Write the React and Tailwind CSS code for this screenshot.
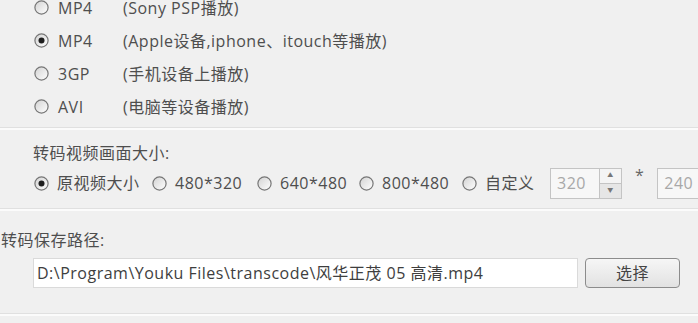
import React from 'react'

const font = { fontFamily: '"Open Sans", "Noto Sans CJK SC", sans-serif' }

function Radio({ checked }) {
  return (
    <svg width="15" height="15" viewBox="0 0 15 15" className="shrink-0">
      <defs>
        <linearGradient id="rg" x1="0" y1="0" x2="1" y2="1">
          <stop offset="0" stopColor="#d2d2d2" />
          <stop offset="1" stopColor="#ffffff" />
        </linearGradient>
      </defs>
      <circle cx="7.5" cy="7.5" r="6.6" fill="url(#rg)" stroke="#767676" strokeWidth="1.2" />
      {checked && <circle cx="7.5" cy="7.5" r="3" fill="#1e1e1e" />}
    </svg>
  )
}

const formats = [
  { name: 'MP4', desc: '(Sony PSP播放)' },
  { name: 'MP4', desc: '(Apple设备,iphone、itouch等播放)', checked: true },
  { name: '3GP', desc: '(手机设备上播放)' },
  { name: 'AVI', desc: '(电脑等设备播放)' },
]

const sizes = [
  { label: '原视频大小', w: 'w-[118px]', checked: true },
  { label: '480*320', w: 'w-[105px]' },
  { label: '640*480', w: 'w-[102px]' },
  { label: '800*480', w: 'w-[103px]' },
  { label: '自定义', w: 'w-[88px]' },
]

function Divider() {
  return (
    <div>
      <div className="h-px bg-[#e0e0e0]" />
      <div className="h-[2px] bg-[#fbfbfb]" />
    </div>
  )
}

export default function App() {
  return (
    <div
      className="relative h-[323px] w-[698px] overflow-hidden bg-[#f0f0f0] text-[16px] tracking-[0.5px] text-[#4e4e4e]"
      style={font}
    >
      <div className="mt-[-9px] pl-[34px]">
        {formats.map((f, i) => (
          <div key={i} className="flex h-[33px] items-center">
            <Radio checked={f.checked} />
            <span className="ml-[9px] w-[65px]">{f.name}</span>
            <span>{f.desc}</span>
          </div>
        ))}
      </div>

      <div className="h-[4px]" />
      <Divider />

      <div className="pl-[33px] pt-[12px]">
        <div className="h-[22px] leading-[22px]">转码视频画面大小:</div>
        <div className="mt-[3px] flex h-[32px] items-center pl-[1px]">
          {sizes.map((s, i) => (
            <div key={i} className={`flex shrink-0 items-center ${s.w}`}>
              <Radio checked={s.checked} />
              <span className="ml-[8px]">{s.label}</span>
            </div>
          ))}
          <div className="flex h-[31px] w-[72px] shrink-0 border border-[#c4c4c4] bg-[#f7f7f7]">
            <div className="flex flex-1 items-center pl-[6px] text-[#a8a8a8]">320</div>
            <div className="flex w-[22px] flex-col border-l border-[#c4c4c4]">
              <div className="flex flex-1 items-center justify-center border-b border-[#c4c4c4] bg-[#f4f4f4] text-[6px] text-[#777]">▲</div>
              <div className="flex flex-1 items-center justify-center bg-[#e6e6e6] text-[6px] text-[#777]">▼</div>
            </div>
          </div>
          <span className="mx-[13px] mt-[-4px] shrink-0 self-start text-[#666]">*</span>
          <div className="flex h-[31px] w-[60px] shrink-0 items-center border border-[#c4c4c4] bg-[#f7f7f7] pl-[6px] text-[#a8a8a8]">
            240
          </div>
        </div>
      </div>

      <div className="h-[9px]" />
      <Divider />

      <div className="pt-[18px]">
        <div className="h-[22px] pl-[1px] leading-[22px]">转码保存路径:</div>
        <div className="mt-[7px] flex items-center pl-[33px]">
          <div className="flex h-[30px] w-[545px] items-center border border-[#dadada] bg-white pl-[3px] text-[#3e3e3e]">
            D:\Program\Youku Files\transcode\风华正茂 05 高清.mp4
          </div>
          <button className="ml-[7px] h-[30px] w-[95px] rounded-[4px] border border-[#8c8c8c] bg-gradient-to-b from-[#f6f6f6] to-[#e2e2e2] text-[16px] text-[#444]">
            选择
          </button>
        </div>
      </div>

      <div className="h-[25px]" />
      <Divider />
    </div>
  )
}
